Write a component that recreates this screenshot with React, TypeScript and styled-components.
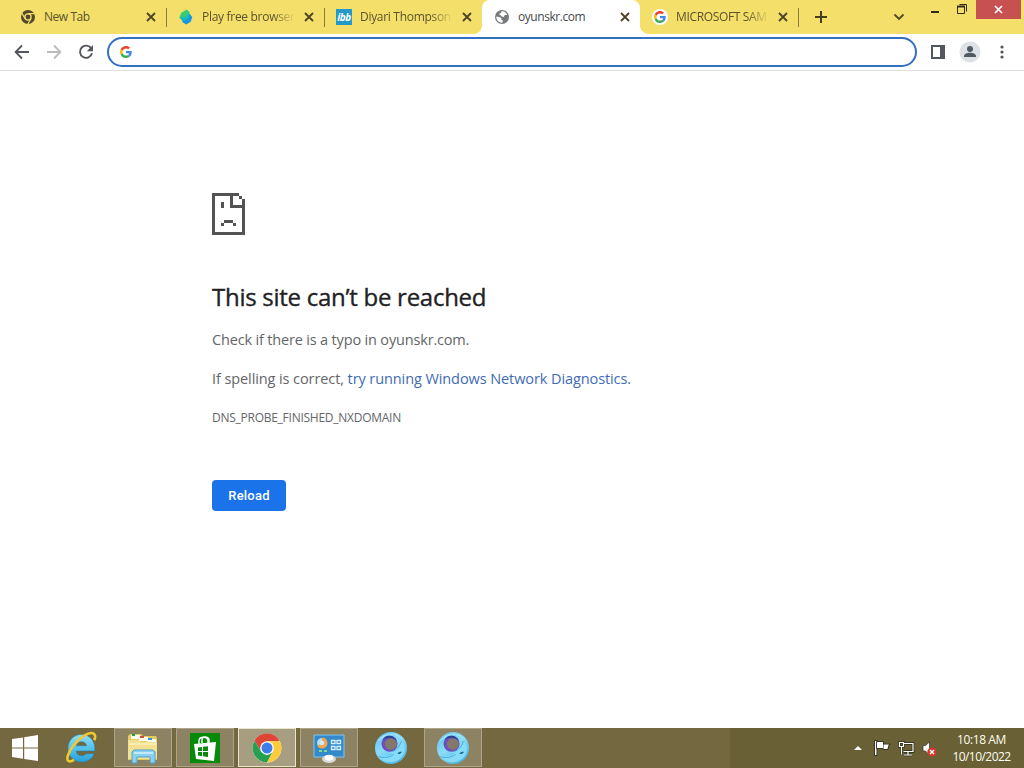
import React from "react";
import styled, { createGlobalStyle } from "styled-components";

const GlobalStyle = createGlobalStyle`
  * {
    box-sizing: border-box;
  }

  body {
    margin: 0;
    overflow: hidden;
    font-family: "Open Sans", "Noto Sans", sans-serif;
  }

  svg {
    display: block;
    flex: none;
  }
`;

const Window = styled.div`
  display: flex;
  flex-direction: column;
  width: 1024px;
  height: 768px;
  background: #fff;
`;

const TabStrip = styled.div`
  display: flex;
  height: 34px;
  padding-left: 8px;
  background: #f4df6b;
`;

const Tab = styled.div<{ $active?: boolean }>`
  position: relative;
  display: flex;
  align-items: center;
  width: 158px;
  height: 34px;
  padding: 0 9px 0 12px;
  color: ${(props) => (props.$active ? "#45484c" : "#5d532c")};
  background: ${(props) => (props.$active ? "#fff" : "transparent")};
  border-radius: 8px 8px 0 0;

  &::before,
  &::after {
    content: "";
    display: ${(props) => (props.$active ? "block" : "none")};
    position: absolute;
    bottom: 0;
    width: 8px;
    height: 8px;
  }

  &::before {
    left: -8px;
    background: radial-gradient(circle at 0 0, transparent 7.5px, #fff 8px);
  }

  &::after {
    right: -8px;
    background: radial-gradient(circle at 100% 0, transparent 7.5px, #fff 8px);
  }
`;

const TabTitle = styled.span<{ $spacing: number; $fade?: boolean }>`
  flex: 1;
  min-width: 0;
  margin: 0 6px 0 8px;
  white-space: nowrap;
  font-size: 12px;
  line-height: 18px;
  letter-spacing: ${(props) => props.$spacing}px;
  ${(props) =>
    props.$fade &&
    "mask-image: linear-gradient(to right, #000 75%, transparent 98%);"}
`;

const Separator = styled.div<{ $hidden?: boolean }>`
  width: 1px;
  height: 19px;
  margin: 8px -1px 0 0;
  background: ${(props) => (props.$hidden ? "transparent" : "#8a7c3c")};
`;

const NewTab = styled.div`
  display: flex;
  align-items: center;
  padding-left: 17px;
`;

const Chevron = styled.div`
  display: flex;
  align-items: center;
  margin-left: auto;
  padding-right: 25px;
`;

const WindowControls = styled.div`
  display: flex;
  padding-right: 3px;
`;

const CloseWindow = styled.div`
  display: flex;
  align-items: center;
  justify-content: center;
  width: 45px;
  height: 19px;
  margin-left: 8px;
  background: #c75050;
`;

const Toolbar = styled.div`
  display: flex;
  align-items: center;
  height: 37px;
  padding: 0 12px;
  border-bottom: 1px solid #dcdedf;
`;

const NavButtons = styled.div`
  display: flex;
  gap: 12px;
  width: 95px;
`;

const Omnibox = styled.div`
  display: flex;
  align-items: center;
  flex: 1;
  height: 30px;
  margin-right: 11px;
  padding-left: 11px;
  border: 2px solid #3470c0;
  border-radius: 15px;
`;

const ToolbarActions = styled.div`
  display: flex;
  align-items: center;
  gap: 11px;
`;

const Page = styled.main`
  flex: 1;
  padding: 122px 0 0 212px;
`;

const Heading = styled.h1`
  margin: 45px 0 0;
  color: #202124;
  font-size: 24px;
  font-weight: 500;
  line-height: 34px;
  letter-spacing: -0.27px;
  -webkit-text-stroke: 0.35px #202124;
`;

const Message = styled.p<{ $spacing: number }>`
  margin: 0;
  padding-top: 15px;
  color: #646669;
  font-size: 14.5px;
  line-height: 24px;
  letter-spacing: ${(props) => props.$spacing}px;
  white-space: nowrap;

  ${Heading} + & {
    padding-top: 14px;
  }
`;

const Link = styled.a`
  color: #3f6cb5;
`;

const ErrorCode = styled.div`
  margin-top: 18px;
  color: #646669;
  font-size: 12px;
  line-height: 18px;
  letter-spacing: -0.26px;
`;

const ReloadButton = styled.button`
  display: block;
  width: 74px;
  height: 31px;
  margin-top: 53px;
  padding: 0;
  color: #fff;
  background: #1a73e8;
  border: 0;
  border-radius: 4px;
  font-family: Roboto, sans-serif;
  font-size: 13px;
  font-weight: 500;
  letter-spacing: 0.2px;
`;

const Taskbar = styled.footer`
  display: flex;
  height: 40px;
  background: linear-gradient(to right, #746840 0 730px, #696035 730px);
`;

const StartButton = styled.div`
  display: flex;
  align-items: center;
  justify-content: center;
  width: 50px;
`;

const Apps = styled.div`
  display: flex;
  gap: 4px;
  padding-left: 2px;
`;

const AppButton = styled.div<{ $state?: "open" | "focused" }>`
  display: flex;
  align-items: center;
  justify-content: center;
  width: 58px;
  height: 39px;
  border: 1px solid
    ${(props) =>
      props.$state === "focused"
        ? "#e9e4ce"
        : props.$state
          ? "#aca587"
          : "transparent"};
  background: ${(props) =>
    props.$state === "focused"
      ? "#a79d80"
      : props.$state
        ? "#8d8261"
        : "transparent"};
`;

const Tray = styled.div`
  display: flex;
  align-items: center;
  margin-left: auto;
`;

const Clock = styled.div`
  width: 84px;
  padding-right: 1px;
  color: #fffef0;
  font-size: 12px;
  line-height: 17px;
  text-align: center;
  white-space: nowrap;
`;

const ClockLine = styled.div<{ $spacing: number }>`
  letter-spacing: ${(props) => props.$spacing}px;
`;

const CloseIcon = ({ color = "#4c4324" }: { color?: string }) => (
  <svg width="12" height="12" viewBox="0 0 12 12">
    <path d="M2 2l8 8M10 2l-8 8" stroke={color} strokeWidth="1.8" />
  </svg>
);

const GoogleIcon = ({ size = 14 }: { size?: number }) => (
  <svg width={size} height={size} viewBox="0 0 48 48">
    <path fill="#EA4335" d="M24 9.5c3.54 0 6.71 1.22 9.21 3.6l6.85-6.85C35.9 2.38 30.47 0 24 0 14.62 0 6.51 5.38 2.56 13.22l7.98 6.19C12.43 13.72 17.74 9.5 24 9.5z" />
    <path fill="#4285F4" d="M46.98 24.55c0-1.57-.15-3.09-.38-4.55H24v9.02h12.94c-.58 2.96-2.26 5.48-4.78 7.18l7.73 6c4.51-4.18 7.09-10.36 7.09-17.65z" />
    <path fill="#FBBC05" d="M10.53 28.59A14.5 14.5 0 0 1 9.77 24c0-1.6.27-3.14.76-4.59l-7.98-6.19A23.9 23.9 0 0 0 0 24c0 3.88.92 7.54 2.56 10.78z" />
    <path fill="#34A853" d="M24 48c6.48 0 11.93-2.13 15.89-5.81l-7.73-6c-2.15 1.45-4.92 2.3-8.16 2.3-6.26 0-11.57-4.22-13.47-9.91l-7.98 6.19C6.51 42.62 14.62 48 24 48z" />
  </svg>
);

const ChromeMonoIcon = () => (
  <svg width="16" height="16" viewBox="0 0 16 16">
    <circle cx="8" cy="8" r="7" fill="#51482b" />
    <circle cx="8" cy="8" r="3.1" fill="none" stroke="#f4df6b" strokeWidth="1.3" />
    <path d="M8 4.6h6.5M5.1 9.7L1.8 4.1M10.9 9.7l-3.2 5.5" stroke="#f4df6b" strokeWidth="1.2" />
  </svg>
);

const PoppyIcon = () => (
  <svg width="16" height="16" viewBox="0 0 16 16">
    <path d="M8.5.6l3 2.4-.6 4.2L5 11 1.4 8.6 3.2 4z" fill="#35cd78" />
    <path d="M11.4 4.6l2.9 3.6-1.6 4.6-4.4 2.7-3.8-2.2-1-4.7 4.3.8z" fill="#1797e2" />
    <path d="M1.4 8.6L7 8.2l4.4-3.6-.6 4.8L6.6 11.8 3.5 11z" fill="#16b9c0" />
  </svg>
);

const IbbBadge = styled.span`
  display: flex;
  align-items: center;
  justify-content: center;
  width: 16px;
  height: 16px;
  flex: none;
  color: #fff;
  background: #2299c9;
  font-family: "Open Sans", sans-serif;
  font-size: 10px;
  font-weight: 700;
  font-style: italic;
  letter-spacing: -0.5px;
`;

const GlobeIcon = () => (
  <svg width="16" height="16" viewBox="0 0 16 16">
    <circle cx="8" cy="8" r="7" fill="#77797b" />
    <path d="M7.2 2.4c2.7-.6 5.1 1.2 6 3.5l-2.4.2-1 1.8-2.2-.3-.8-1.4-1.6-.5.4-1.3 1.5-.3z" fill="#fff" />
    <path d="M2.3 7.6l3.8.6 1.5 1.5-.4 1.4 1.8.3-.7 2.4C5 14 2.2 11.7 2.3 7.6z" fill="#fff" />
  </svg>
);

const GoogleFavicon = styled.span`
  display: flex;
  align-items: center;
  justify-content: center;
  width: 16px;
  height: 16px;
  flex: none;
  border-radius: 50%;
  background: #fff;
`;

const BackIcon = () => (
  <svg width="20" height="20" viewBox="0 0 20 20">
    <path d="M17 10H4M10 3.5L3.6 10l6.4 6.5" fill="none" stroke="#53565a" strokeWidth="1.8" />
  </svg>
);

const ForwardIcon = () => (
  <svg width="20" height="20" viewBox="0 0 20 20">
    <path d="M3 10h13M10 3.5l6.4 6.5-6.4 6.5" fill="none" stroke="#babcbe" strokeWidth="1.8" />
  </svg>
);

const ReloadIcon = () => (
  <svg width="20" height="20" viewBox="0 0 20 20">
    <path d="M15.3 6.5A6.1 6.1 0 1 0 16 11.3" fill="none" stroke="#53565a" strokeWidth="1.9" />
    <path d="M17 3v6.2h-6.2z" fill="#53565a" />
  </svg>
);

const SadFileIcon = () => (
  <svg width="33" height="42" viewBox="0 0 11 14" shapeRendering="crispEdges">
    <path
      d="M0 0h9v1H7v3h3V2h1v12H0zM1 1v12h9V5H6V1zM9 1h1v1H9zM3 3h1v2H3zM4 9h3v1H4zM3 10h1v1H3zM7 10h1v1H7z"
      fill="#535353"
      fillRule="evenodd"
    />
  </svg>
);

const WindowsIcon = () => (
  <svg width="28" height="26" viewBox="0 0 28 26">
    <path d="M1 4l11-1.6v10H1zM13.2 2.2L27 0v12.4H13.2zM1 13.6h11v10.1L1 22zM13.2 13.6H27V26l-13.8-2.1z" fill="#fff" />
  </svg>
);

const ExplorerEIcon = () => (
  <svg width="34" height="34" viewBox="0 0 34 34">
    <defs>
      <linearGradient id="ie" x1="0" y1="0" x2="0" y2="1">
        <stop offset="0" stopColor="#91def5" />
        <stop offset="0.55" stopColor="#4fc0ea" />
        <stop offset="1" stopColor="#2b9fd8" />
      </linearGradient>
    </defs>
    <path
      d="M17.5 3.5C9.5 3.5 4 9.8 4 17.3 4 25.2 9.8 31 17.5 31c5.9 0 10.7-3 12.6-8.3h-8.3c-.9 1.4-2.3 2.1-4.2 2.1-3 0-5.2-2-5.4-4.8h18.6C31.6 10.2 26 3.5 17.5 3.5zM12.3 14.8c.6-2.6 2.5-4.1 5.2-4.1s4.6 1.5 5.1 4.1z"
      fill="url(#ie)"
      stroke="#267ca8"
      strokeWidth="0.5"
      fillRule="evenodd"
    />
    <path
      d="M30.3 9.2c1.5-3.6 1-6.2-1.4-6.9C24.5.9 15.5 6.4 9.2 14.8c-5.1 6.8-7.4 13.6-4.7 15.2 1.3.8 3.3.3 5.6-1.1"
      fill="none"
      stroke="#f0c92f"
      strokeWidth="2.6"
    />
  </svg>
);

const FolderIcon = () => (
  <svg width="34" height="34" viewBox="0 0 34 34">
    <path d="M2 5l2-2h11l2 2h13l1 2v22H2z" fill="#e5c961" />
    <path d="M5 4h9v4H5zM13 6h9v4h-9zM21 8h9v4h-9z" fill="#fffbed" />
    <path d="M6 3h3v2H6z" fill="#299b50" />
    <path d="M14 5h4v2h-4z" fill="#d84b37" />
    <path d="M22 7h4v2h-4z" fill="#3e94c7" />
    <path d="M2 9h11l2 2h16v17H2z" fill="#f4e091" />
    <path d="M3 12h27v2H3z" fill="#fbebae" />
    <path d="M6 32V21l2-2h19l2 2v11h-5v-6H11v6z" fill="#8bd0ef" stroke="#4aa6cf" />
    <path d="M8 21h19v2H8z" fill="#c3e9fb" />
  </svg>
);

const StoreIcon = () => (
  <svg width="30" height="30" viewBox="0 0 30 30">
    <path d="M0 0h30v30H0z" fill="#078a0c" />
    <path d="M9 11V8c0-5 9-5 9 0v3M12 10V7c0-5 7-3 7 0v3" fill="none" stroke="#fff" strokeWidth="1.4" />
    <path d="M4 11l22-2-2 19-18-2z" fill="#fff" />
    <path d="M8 14.5l4-.5v4H8zM13 13.8l5-.6V18h-5zM8 19h4v4.2l-4-.6zM13 19h5v5l-5-.7z" fill="#078a0c" />
  </svg>
);

const ChromeIcon = () => (
  <svg width="30" height="30" viewBox="0 0 48 48">
    <circle cx="24" cy="24" r="23" fill="#fff" />
    <path d="M24 13h20.3A23 23 0 0 0 4.1 12.5l10.4 17.1L24 13z" fill="#df4534" />
    <path d="M4.1 12.5A23 23 0 0 0 24 47l9.5-17.5h-19z" fill="#269f50" />
    <path d="M24 13h20.3A23 23 0 0 1 24 47l9.5-17.5z" fill="#fccb39" />
    <circle cx="24" cy="24" r="11" fill="#fff" />
    <circle cx="24" cy="24" r="8.8" fill="#3b7de9" />
  </svg>
);

const ControlPanelIcon = () => (
  <svg width="34" height="30" viewBox="0 0 34 30">
    <path d="M2 2h30v22H2z" fill="#328acb" stroke="#83c5eb" />
    <circle cx="10" cy="10" r="5" fill="#b6def4" />
    <path d="M10 10V4.5a5.5 5.5 0 1 1-4.8 8.2z" fill="#eea64e" />
    <circle cx="10" cy="10" r="2.3" fill="#d4eaf5" />
    <path d="M19.5 7.5h3.5v3h-3.5zM25 7.5h3.5v3H25zM19.5 13.5h3.5v3h-3.5zM25 13.5h3.5v3H25z" fill="#2f80bd" stroke="#d5f0ff" strokeWidth="1.3" />
    <path d="M7 18h3M12 18h3" stroke="#83dc90" strokeWidth="2" />
    <ellipse cx="17" cy="26" rx="7" ry="4" fill="#d6d9d5" />
    <ellipse cx="17" cy="24.8" rx="4.3" ry="3" fill="#fff" />
  </svg>
);

const OrbIcon = ({ id }: { id: string }) => (
  <svg width="34" height="34" viewBox="0 0 34 34">
    <defs>
      <linearGradient id={id} x1="0" y1="0" x2="0.7" y2="1">
        <stop offset="0" stopColor="#5cc0ec" />
        <stop offset="0.5" stopColor="#8bdcf8" />
        <stop offset="1" stopColor="#4bb5e8" />
      </linearGradient>
    </defs>
    <circle cx="17" cy="17" r="16" fill={`url(#${id})`} />
    <path d="M4 10C9 1 24 0 29 9c-5-5-14-7-19-3-3 2-5 4-6 4z" fill="#a5e6fb" />
    <ellipse cx="15.5" cy="12.8" rx="8" ry="8" fill="#6d4fc0" />
    <path d="M8.5 9C11 3.5 20 3 23 10c-4-4-10-4.5-14.5-1z" fill="#2c4191" />
    <ellipse cx="16.8" cy="13" rx="6" ry="5.8" fill="#85776a" />
    <path d="M14 21c6 1 11-3 14-11 4 6 4 12-1 17-6 6-18 6-23-3 4 2 11 2 15-2-2 0-4 0-5-1z" fill="#86dbf8" />
    <path d="M4.5 25.5c5 2 11 1 15-2" fill="none" stroke="#3fa9e0" strokeWidth="0.9" />
    <path d="M27.5 10c-2 6-5 9-9 10.5" fill="none" stroke="#4aa6dd" strokeWidth="0.8" />
    <path d="M23.5 22.5c1-1.7 3-2 4.3-1.7-.6 1.9-2.4 2.9-4.3 1.7z" fill="#14688f" />
  </svg>
);

const TrayIcons = () => (
  <svg width="86" height="20" viewBox="0 0 86 20">
    <path d="M0 12l4-4 4 4z" fill="#fff" />
    <g fill="#fff" stroke="#2b2b1c" strokeWidth="1.6" paintOrder="stroke">
      <path d="M21 3h1.5v14H21z" />
      <path d="M23 4h6v6h-6zM29.5 6.5H35c-1 1-1 3-1.5 4.5h-4z" />
    </g>
    <g fill="none">
      <path d="M50 5.5h9v8H49.500M54 14v3M50 17h8M47.500 8.500v8M45.500 4.500h4v4h-4z" stroke="#2b2b1c" strokeWidth="2.6" />
      <path d="M50 5.500h9v8H49.500M54 14v3M50 17h8M47.500 8.500v8M45.500 4.500h4v4h-4z" stroke="#fff" strokeWidth="1.2" />
    </g>
    <path d="M69 7.500h2.500L75.500 4v13l-4-4H69z" fill="#fff" stroke="#333324" strokeWidth="0.7" />
    <circle cx="78" cy="14" r="4.600" fill="#d6362f" />
    <path d="M76 12l4 4M80 12l-4 4" stroke="#fff" strokeWidth="1.4" />
  </svg>
);

interface TabInfo {
  title: string;
  icon: React.ReactNode;
  spacing: number;
  fade?: boolean;
  active?: boolean;
  separator?: boolean;
}

const tabs: TabInfo[] = [
  { title: "New Tab", icon: <ChromeMonoIcon />, spacing: -0.45, separator: true },
  { title: "Play free browser", icon: <PoppyIcon />, spacing: -0.3, fade: true, separator: true },
  { title: "Diyari Thompson", icon: <IbbBadge>ibb</IbbBadge>, spacing: -0.3, fade: true },
  { title: "oyunskr.com", icon: <GlobeIcon />, spacing: -0.45, active: true },
  { title: "MICROSOFT SAM", icon: <GoogleFavicon><GoogleIcon size={12} /></GoogleFavicon>, spacing: -0.35, fade: true, separator: true },
];

const App = () => {
  return (
    <Window>
      <GlobalStyle />
      <TabStrip>
        {tabs.map((tab) => (
          <React.Fragment key={tab.title}>
            <Tab $active={tab.active}>
              {tab.icon}
              <TabTitle $spacing={tab.spacing} $fade={tab.fade}>
                {tab.title}
              </TabTitle>
              <CloseIcon />
            </Tab>
            <Separator $hidden={!tab.separator} />
          </React.Fragment>
        ))}
        <NewTab>
          <svg width="12" height="12" viewBox="0 0 12 12">
            <path d="M6 0v12M0 6h12" stroke="#453c1d" strokeWidth="2" />
          </svg>
        </NewTab>
        <Chevron>
          <svg width="12" height="12" viewBox="0 0 12 12">
            <path d="M1.5 3.500L6 8l4.500-4.500" fill="none" stroke="#51472a" strokeWidth="1.8" />
          </svg>
        </Chevron>
        <WindowControls>
          <svg width="38" height="19" viewBox="0 0 38 19">
            <path d="M1 12h8" stroke="#302a18" strokeWidth="2" />
            <path d="M27.500 6.500h7v7h-7zM29.500 4.500h7v7" fill="none" stroke="#302a18" />
            <path d="M27 6.500h8" stroke="#302a18" strokeWidth="2" />
          </svg>
          <CloseWindow>
            <svg width="9" height="9" viewBox="0 0 9 9">
              <path d="M1 1l7 7M8 1L1 8" stroke="#fff" strokeWidth="1.7" />
            </svg>
          </CloseWindow>
        </WindowControls>
      </TabStrip>
      <Toolbar>
        <NavButtons>
          <BackIcon />
          <ForwardIcon />
          <ReloadIcon />
        </NavButtons>
        <Omnibox>
          <GoogleIcon size={12} />
        </Omnibox>
        <ToolbarActions>
          <svg width="20" height="20" viewBox="0 0 20 20">
            <path d="M4 4h12v12H4z" fill="none" stroke="#53565a" strokeWidth="2" />
            <path d="M12 4h4v12h-4z" fill="#53565a" />
          </svg>
          <svg width="22" height="22" viewBox="0 0 22 22">
            <circle cx="11" cy="11" r="10.5" fill="#dee1e6" />
            <circle cx="11" cy="8" r="3" fill="#515963" />
            <path d="M5 16v-1c0-2.1 3.2-3.3 6-3.3s6 1.2 6 3.3v1z" fill="#515963" />
          </svg>
          <svg width="20" height="20" viewBox="0 0 20 20">
            <circle cx="10" cy="5" r="1.6" fill="#53565a" />
            <circle cx="10" cy="10" r="1.6" fill="#53565a" />
            <circle cx="10" cy="15" r="1.6" fill="#53565a" />
          </svg>
        </ToolbarActions>
      </Toolbar>
      <Page>
        <SadFileIcon />
        <Heading>This site can’t be reached</Heading>
        <Message $spacing={-0.17}>Check if there is a typo in oyunskr.com.</Message>
        <Message $spacing={-0.09}>
          If spelling is correct, <Link>try running Windows Network Diagnostics.</Link>
        </Message>
        <ErrorCode>DNS_PROBE_FINISHED_NXDOMAIN</ErrorCode>
        <ReloadButton>Reload</ReloadButton>
      </Page>
      <Taskbar>
        <StartButton>
          <WindowsIcon />
        </StartButton>
        <Apps>
          <AppButton>
            <ExplorerEIcon />
          </AppButton>
          <AppButton $state="open">
            <FolderIcon />
          </AppButton>
          <AppButton $state="open">
            <StoreIcon />
          </AppButton>
          <AppButton $state="focused">
            <ChromeIcon />
          </AppButton>
          <AppButton $state="open">
            <ControlPanelIcon />
          </AppButton>
          <AppButton>
            <OrbIcon id="orb-pinned" />
          </AppButton>
          <AppButton $state="open">
            <OrbIcon id="orb-open" />
          </AppButton>
        </Apps>
        <Tray>
          <TrayIcons />
          <Clock>
            <ClockLine $spacing={-0.4}>10:18 AM</ClockLine>
            <ClockLine $spacing={-0.55}>10/10/2022</ClockLine>
          </Clock>
        </Tray>
      </Taskbar>
    </Window>
  );
};

export default App;
